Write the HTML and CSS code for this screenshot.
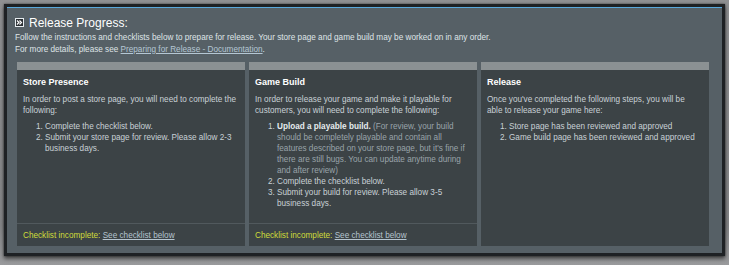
FILE: index.html
```html
<!DOCTYPE html>
<html lang="en">
<head>
    <meta charset="UTF-8">
    <title>Release Progress</title>
    <link rel="stylesheet" href="styles.css">
</head>
<body>
    <div class="frame">
        <div class="panel">
            <h2 class="title">
                <svg class="title-icon" width="9" height="9" viewBox="0 0 9 9">
                    <rect x="0.5" y="0.5" width="8" height="8" fill="#2a2f33" stroke="#e6ecef" stroke-width="1"/>
                    <path d="M2 2.5 L4 4.5 L2 6.5 M4.5 2.5 L6.5 4.5 L4.5 6.5" fill="none" stroke="#ffffff" stroke-width="1.2"/>
                </svg>
                Release Progress:
            </h2>
            <p class="intro">
                Follow the instructions and checklists below to prepare for release. Your store page and game build may be worked on in any order.<br>
                For more details, please see <a href="#">Preparing for Release - Documentation</a>.
            </p>

            <div class="cards">
                <div class="card">
                    <div class="card-bar"></div>
                    <div class="card-body">
                        <h3>Store Presence</h3>
                        <p>In order to post a store page, you will need to complete the following:</p>
                        <ol>
                            <li>Complete the checklist below.</li>
                            <li>Submit your store page for review. Please allow 2-3 business days.</li>
                        </ol>
                    </div>
                    <div class="card-foot">
                        <span class="warn">Checklist incomplete:</span> <a href="#">See checklist below</a>
                    </div>
                </div>

                <div class="card">
                    <div class="card-bar"></div>
                    <div class="card-body">
                        <h3>Game Build</h3>
                        <p>In order to release your game and make it playable for customers, you will need to complete the following:</p>
                        <ol>
                            <li><b>Upload a playable build.</b> <span class="note">(For review, your build should be completely playable and contain all features described on your store page, but it's fine if there are still bugs. You can update anytime during and after review)</span></li>
                            <li>Complete the checklist below.</li>
                            <li>Submit your build for review. Please allow 3-5 business days.</li>
                        </ol>
                    </div>
                    <div class="card-foot">
                        <span class="warn">Checklist incomplete:</span> <a href="#">See checklist below</a>
                    </div>
                </div>

                <div class="card">
                    <div class="card-bar"></div>
                    <div class="card-body">
                        <h3>Release</h3>
                        <p>Once you've completed the following steps, you will be able to release your game here:</p>
                        <ol>
                            <li>Store page has been reviewed and approved</li>
                            <li>Game build page has been reviewed and approved</li>
                        </ol>
                    </div>
                </div>
            </div>
        </div>
    </div>
</body>
</html>
```

FILE: styles.css
```css
body {
    margin: 0;
    height: 265px;
    overflow: hidden;
    font-family: "Liberation Sans", Arial, sans-serif;
    background: linear-gradient(180deg, #8f9092 0%, #848587 85%, #9a9b9d 100%);
}
.frame {
    margin: 4px 4px 0 4px;
    border: 3px solid #1e2124;
    box-shadow: 0 0 2px rgba(0, 0, 0, 0.6), 0 3px 4px rgba(0, 0, 0, 0.5);
}
.panel {
    background-color: #566066;
    border-top: 1px solid #5aa9dc;
    padding: 8px 13px 7px 8px;
}
.title {
    display: flex;
    align-items: center;
    gap: 5px;
    margin: 0;
    height: 14px;
    font-size: 12px;
    font-weight: normal;
    color: #ffffff;
}
.title-icon {
    margin-top: -1px;
}
.intro {
    margin: 2px 0 0;
    font-size: 8.2px;
    line-height: 11.5px;
    color: #dfe4e7;
}
.intro a {
    color: #b5c7d4;
}
.cards {
    display: grid;
    grid-template-columns: repeat(3, 1fr);
    gap: 4px;
    height: 184px;
    margin: 7px 0 0 2px;
}
.card {
    display: flex;
    flex-direction: column;
    background-color: #3c4346;
}
.card-bar {
    height: 8px;
    background-color: #8b9193;
}
.card-body {
    flex: 1;
    padding: 6px 8px 0 6px;
    font-size: 8.2px;
    line-height: 11px;
    color: #c9d1d6;
}
.card-body h3 {
    margin: 0;
    font-size: 9px;
    line-height: 12px;
    color: #ffffff;
}
.card-body p {
    margin: 6px 0 0;
}
.card-body ol {
    margin: 5px 0 0;
    padding-left: 22px;
}
.card-body b {
    color: #e6ebee;
}
.note {
    color: #9aa4aa;
}
.card-foot {
    height: 22px;
    line-height: 23px;
    padding: 0 6px;
    border-top: 1px solid #51595d;
    font-size: 8.2px;
    color: #b5c4cf;
}
.warn {
    color: #cfdc3a;
}
.card-foot a {
    color: #b5c4cf;
}
```
